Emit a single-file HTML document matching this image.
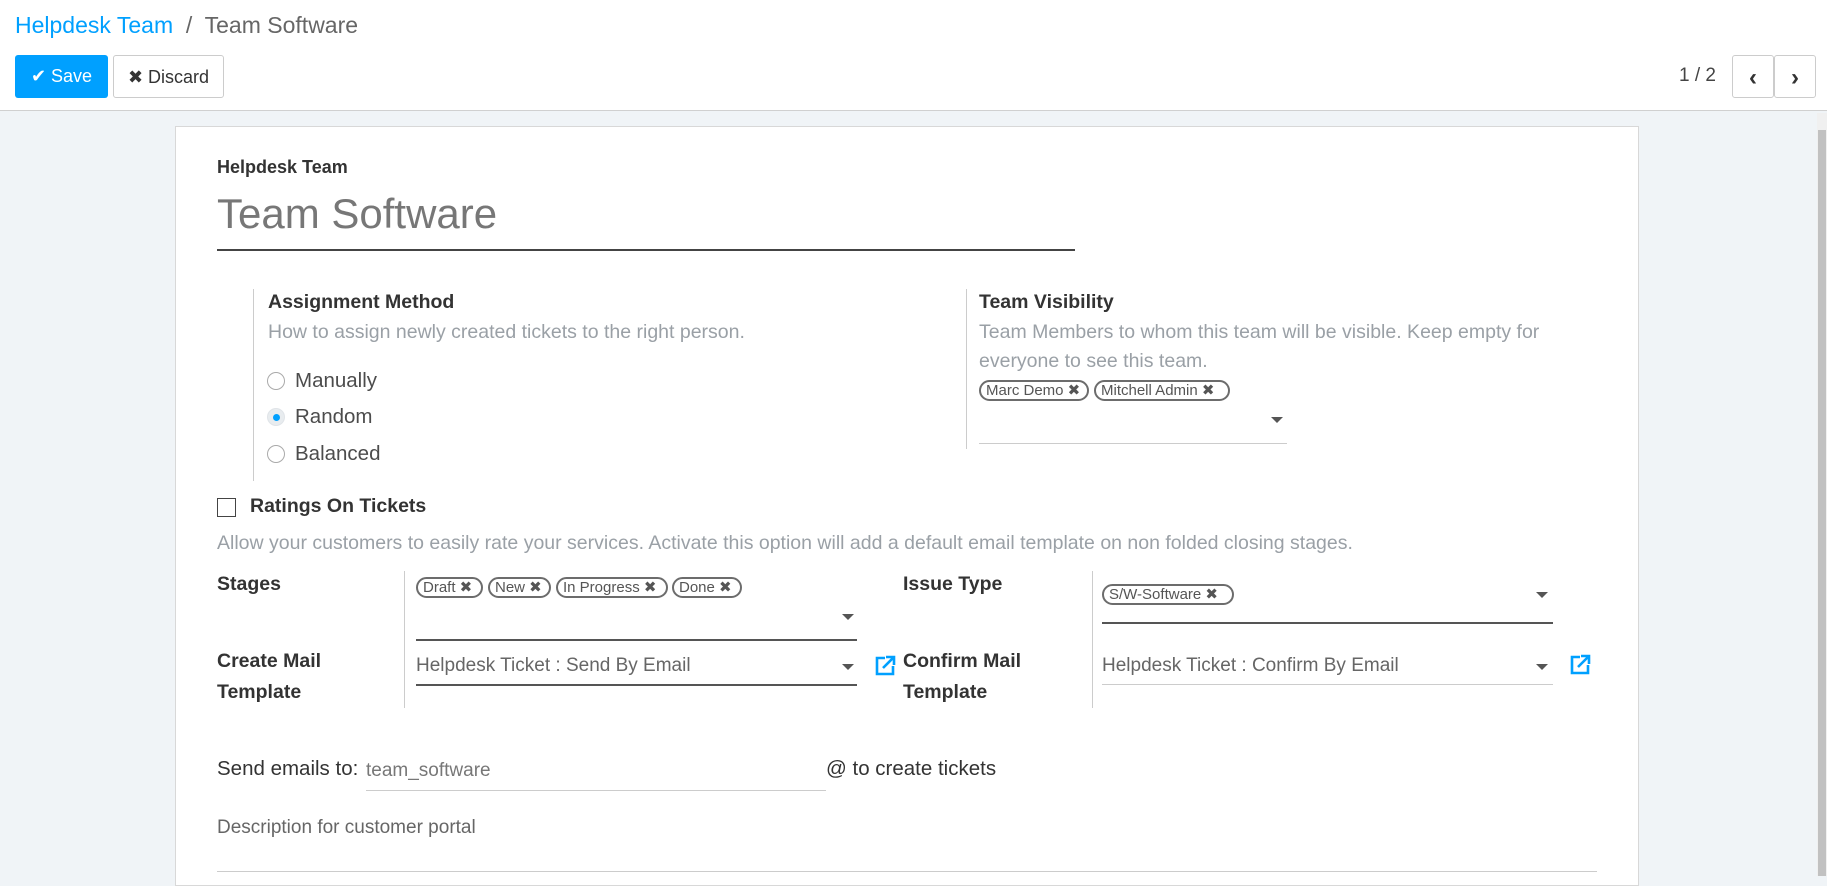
<!DOCTYPE html>
<html><head><meta charset="utf-8"><style>
*{box-sizing:border-box}
body{margin:0;width:1827px;height:876px;overflow:hidden;background:#f0f4f7;font-family:"Liberation Sans",sans-serif;color:#4c4c4c;position:relative}
.a{position:absolute;white-space:nowrap}
.hdr{position:absolute;left:0;top:0;width:1827px;height:111px;background:#fff;border-bottom:1px solid #d0d0d0}
.btn{position:absolute;top:55px;height:43px;border-radius:3px;font-size:18px;line-height:43px;text-align:center}
.sheet{position:absolute;left:175px;top:126px;width:1464px;height:760px;background:#fff;border:1px solid #d8d8d8}
.lbl{font-weight:bold;font-size:19.5px;color:#333}
.muted{color:#9aa0a6;font-size:19.5px}
.tag{position:absolute;height:21px;border:2px solid #6c6c6c;border-radius:11px;font-size:15px;line-height:17px;padding:0 5px;color:#555;overflow:hidden}
.caret{position:absolute;width:0;height:0;border-left:6px solid transparent;border-right:6px solid transparent;border-top:6px solid #555}
.ul{position:absolute;height:1px;background:#ccc}
.ulr{position:absolute;height:2px;background:#555}
.vl{position:absolute;width:1px;background:#ccc}
.radio{position:absolute;width:18px;height:18px;border:1px solid #aaa;border-radius:50%;background:#fff}
.val{font-size:19px;color:#666}
</style></head><body>
<div class="hdr">
  <div class="a" style="left:15px;top:12px;font-size:23px;color:#00a0ff">Helpdesk Team <span style="color:#666">&nbsp;/&nbsp; Team Software</span></div>
  <div class="btn" style="left:15px;width:93px;background:#00a0ff;color:#fff">✔ Save</div>
  <div class="btn" style="left:113px;width:111px;border:1px solid #ccc;color:#333;background:#fff">✖ Discard</div>
  <div class="a" style="left:1679px;top:65px;font-size:19px;color:#444">1 / 2</div>
  <div class="btn" style="left:1732px;width:42px;border:1px solid #ccc;font-weight:bold;font-size:24px;color:#333">&#x2039;</div>
  <div class="btn" style="left:1774px;width:42px;border:1px solid #ccc;font-weight:bold;font-size:24px;color:#333">&#x203A;</div>
</div>
<div class="a" style="left:1817px;top:113px;width:10px;height:763px;background:#f0f0f0"></div>
<div class="a" style="left:1818px;top:130px;width:8px;height:746px;background:#c1c1c1"></div>
<div class="sheet"></div>

<div class="a lbl" style="left:217px;top:157px;font-size:18px">Helpdesk Team</div>
<div class="a" style="left:217px;top:190px;font-size:42px;color:#777">Team Software</div>
<div class="ulr" style="left:217px;top:249px;width:858px;height:2px;background:#444"></div>

<div class="vl" style="left:253px;top:289px;height:192px"></div>
<div class="a lbl" style="left:268px;top:291px">Assignment Method</div>
<div class="a muted" style="left:268px;top:321px">How to assign newly created tickets to the right person.</div>
<div class="radio" style="left:267px;top:372px"></div><div class="a" style="left:295px;top:369px;font-size:20.5px">Manually</div>
<div class="radio" style="left:267px;top:408px;background:#e8ecef;border-color:#e0e4e8"></div><div class="a" style="left:273px;top:414px;width:7px;height:7px;border-radius:50%;background:#00a0ff"></div><div class="a" style="left:295px;top:405px;font-size:20.5px">Random</div>
<div class="radio" style="left:267px;top:445px"></div><div class="a" style="left:295px;top:442px;font-size:20.5px">Balanced</div>

<div class="vl" style="left:966px;top:289px;height:160px"></div>
<div class="a lbl" style="left:979px;top:291px">Team Visibility</div>
<div class="a muted" style="left:979px;top:321px">Team Members to whom this team will be visible. Keep empty for</div>
<div class="a muted" style="left:979px;top:350px">everyone to see this team.</div>
<div class="tag" style="left:979px;top:380px;width:110px">Marc Demo ✖</div>
<div class="tag" style="left:1094px;top:380px;width:136px">Mitchell Admin ✖</div>
<div class="caret" style="left:1271px;top:417px"></div>
<div class="ul" style="left:979px;top:443px;width:308px"></div>

<div class="a" style="left:217px;top:498px;width:19px;height:19px;border:1px solid #444"></div>
<div class="a lbl" style="left:250px;top:495px">Ratings On Tickets</div>
<div class="a muted" style="left:217px;top:532px">Allow your customers to easily rate your services. Activate this option will add a default email template on non folded closing stages.</div>

<div class="a lbl" style="left:217px;top:573px">Stages</div>
<div class="vl" style="left:404px;top:571px;height:137px"></div>
<div class="tag" style="left:416px;top:577px;width:67px">Draft ✖</div>
<div class="tag" style="left:488px;top:577px;width:63px">New ✖</div>
<div class="tag" style="left:556px;top:577px;width:112px">In Progress ✖</div>
<div class="tag" style="left:672px;top:577px;width:70px">Done ✖</div>
<div class="caret" style="left:842px;top:614px"></div>
<div class="ulr" style="left:416px;top:639px;width:441px"></div>

<div class="a lbl" style="left:217px;top:646px;line-height:31px">Create Mail<br>Template</div>
<div class="a val" style="left:416px;top:655px">Helpdesk Ticket : Send By Email</div>
<div class="caret" style="left:842px;top:664px"></div>
<div class="ulr" style="left:416px;top:684px;width:441px"></div>
<svg class="a" style="left:873px;top:654px" width="24" height="24" viewBox="0 0 24 24"><path d="M12 4H4v16h16v-8" fill="none" stroke="#00a0ff" stroke-width="2.6"/><path d="M10 14L20 4M13 3h8v8" fill="none" stroke="#00a0ff" stroke-width="2.6"/></svg>

<div class="a lbl" style="left:903px;top:573px">Issue Type</div>
<div class="vl" style="left:1092px;top:571px;height:137px"></div>
<div class="tag" style="left:1102px;top:584px;width:132px">S/W-Software ✖</div>
<div class="caret" style="left:1536px;top:592px"></div>
<div class="ulr" style="left:1102px;top:622px;width:451px"></div>

<div class="a lbl" style="left:903px;top:646px;line-height:31px">Confirm Mail<br>Template</div>
<div class="a val" style="left:1102px;top:655px">Helpdesk Ticket : Confirm By Email</div>
<div class="caret" style="left:1536px;top:664px"></div>
<div class="ul" style="left:1102px;top:684px;width:451px"></div>
<svg class="a" style="left:1568px;top:653px" width="24" height="24" viewBox="0 0 24 24"><path d="M12 4H4v16h16v-8" fill="none" stroke="#00a0ff" stroke-width="2.6"/><path d="M10 14L20 4M13 3h8v8" fill="none" stroke="#00a0ff" stroke-width="2.6"/></svg>

<div class="a" style="left:217px;top:757px;font-size:20.5px;color:#333">Send emails to:</div>
<div class="a val" style="left:366px;top:760px;color:#777">team_software</div>
<div class="ul" style="left:366px;top:790px;width:460px"></div>
<div class="a" style="left:826px;top:757px;font-size:20.5px;color:#333">@ to create tickets</div>

<div class="a" style="left:217px;top:817px;font-size:19px;color:#666">Description for customer portal</div>
<div class="ul" style="left:217px;top:871px;width:1380px"></div>
</body></html>
